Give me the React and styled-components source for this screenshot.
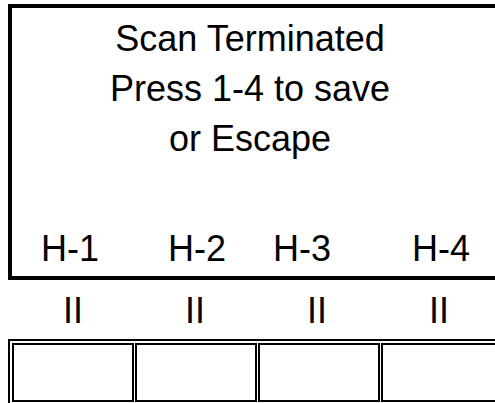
import React from 'react';
import styled, { createGlobalStyle } from 'styled-components';

const GlobalStyle = createGlobalStyle`
    body {
        margin: 0;
        padding: 4px 0 0 8px;
        background: #fff;
        color: #000;
        font-family: "Liberation Sans", Arial, sans-serif;
        font-size: 36px;
    }
`;

/* Data ---------------------------*/
const labels = [
    { text: 'H-1', lead: 29 },
    { text: 'H-2', lead: 69 },
    { text: 'H-3', lead: 47 },
    { text: 'H-4', lead: 81 },
];

const App = () => {
    return (
        <AppStyled className='App'>
            <GlobalStyle />

            <Screen className="screen">
                <Message>
                    <div>Scan Terminated</div>
                    <div>Press 1-4 to save</div>
                    <div>or Escape</div>
                </Message>

                <LabelRow>
                    { labels.map((label) => (
                        <Label key={ label.text } $lead={ label.lead }>{ label.text }</Label>
                    )) }
                </LabelRow>
            </Screen>

            <MarkRow>
                { labels.map((label) => (
                    <Mark key={ label.text }>II</Mark>
                )) }
            </MarkRow>

            <Slots>
                { labels.map((label) => (
                    <Slot key={ label.text } />
                )) }
            </Slots>
        </AppStyled>
    );
}

export default App;

// the panel is wider than the window: clip it at the right edge
const AppStyled = styled.div`
    width: 487px;
    height: 399px;
    overflow: hidden;
`;

const Screen = styled.div`
    display: flex;
    flex-direction: column;
    justify-content: space-between;

    width: 520px;
    height: 268px;
    border: solid 4px #000;
`;

const Message = styled.div`
    width: 476px;
    padding-top: 6px;
    line-height: 50px;
    text-align: center;
`;

const LabelRow = styled.div`
    display: flex;
    padding-bottom: 2px;
    line-height: 50px;
`;

const Label = styled.span`
    margin-left: ${ props => props.$lead }px;
`;

const MarkRow = styled.div`
    display: grid;
    grid-template-columns: repeat(4, 122px);
    margin: 10px 0 0 4px;
    line-height: 41px;
    text-align: center;
`;

const Mark = styled.span``;

const Slots = styled.div`
    display: grid;
    grid-template-columns: repeat(3, 122px) 160px;
    gap: 1px;

    width: max-content;
    margin-top: 8px;
    padding: 2px;
    border: solid 2px #000;
`;

const Slot = styled.div`
    height: 55px;
    border: solid 2px #000;
`;
